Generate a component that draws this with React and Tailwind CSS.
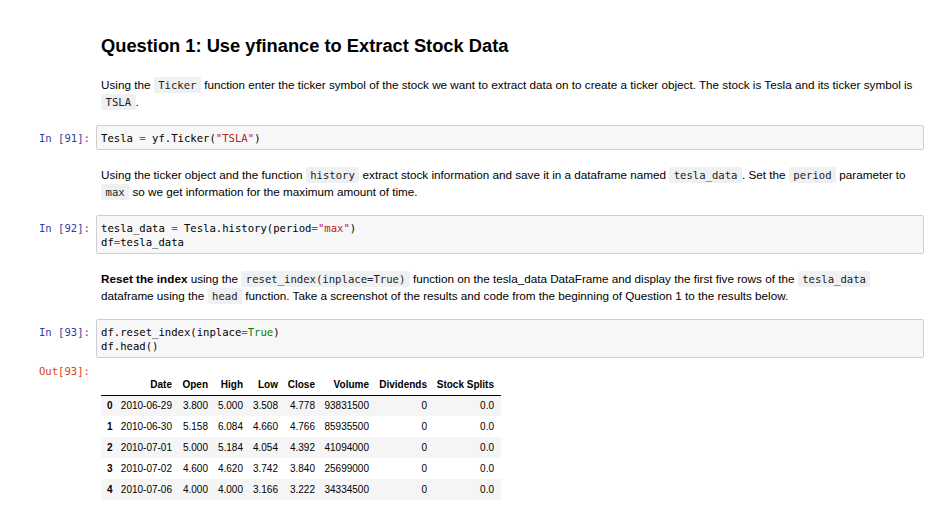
import React from 'react';

const mono = "font-['DejaVu_Sans_Mono',monospace]";

function Code({ children }) {
    return (
        <code className={`${mono} text-[10.6px] text-[#222] bg-[#eff0f1] px-[4.5px] py-[2px] rounded-[2px]`}>
            {children}
        </code>
    );
}

function CodeCell({ n, lines }) {
    return (
        <div className="flex mt-[15px]">
            <div className={`${mono} w-[96px] shrink-0 text-right pr-[6px] pt-[6px] text-[10.6px] leading-[14px] text-[#303f9f]`}>
                In [{n}]:
            </div>
            <div className={`${mono} flex-1 bg-[#f7f7f7] border border-[#cfcfcf] rounded-[2px] pl-[4px] pt-[5px] pb-[4px] text-[10.6px] leading-[14px] text-black whitespace-pre`}>
                {lines.map((l, i) => (
                    <div key={i}>{l}</div>
                ))}
            </div>
        </div>
    );
}

function Md({ children, first }) {
    return (
        <div className={`${first ? 'mt-[20px]' : 'mt-[17px]'} pl-[101px] text-[11.7px] leading-[16.5px] text-black`}>
            {children}
        </div>
    );
}

const Op = ({ children }) => <span className="text-[#aa22ff]">{children}</span>;
const Str = ({ children }) => <span className="text-[#ba2121]">{children}</span>;
const Kw = ({ children }) => <span className="text-[#008000]">{children}</span>;

const rows = [
    ['0', '2010-06-29', '3.800', '5.000', '3.508', '4.778', '93831500', '0', '0.0'],
    ['1', '2010-06-30', '5.158', '6.084', '4.660', '4.766', '85935500', '0', '0.0'],
    ['2', '2010-07-01', '5.000', '5.184', '4.054', '4.392', '41094000', '0', '0.0'],
    ['3', '2010-07-02', '4.600', '4.620', '3.742', '3.840', '25699000', '0', '0.0'],
    ['4', '2010-07-06', '4.000', '4.000', '3.166', '3.222', '34334500', '0', '0.0'],
];

export default function App() {
    return (
        <div className="w-[937px] h-[524px] overflow-hidden bg-white pr-[13px] font-['Liberation_Sans',Arial,sans-serif]">
            {/* Heading */}
            <h2 className="pt-[35px] pl-[101px] text-[18.3px] leading-[22px] font-bold text-black">
                Question 1: Use yfinance to Extract Stock Data
            </h2>

            <Md first>
                <div className="whitespace-nowrap">
                    Using the <Code>Ticker</Code> function enter the ticker symbol of the stock we want to extract data on to create a ticker object. The stock is Tesla and its ticker symbol is
                </div>
                <div className="whitespace-nowrap">
                    <Code>TSLA</Code>.
                </div>
            </Md>

            <CodeCell n="91" lines={[<>Tesla <Op>=</Op> yf.Ticker(<Str>"TSLA"</Str>)</>]} />

            <Md>
                <div className="whitespace-nowrap">
                    Using the ticker object and the function <Code>history</Code> extract stock information and save it in a dataframe named <Code>tesla_data</Code>. Set the <Code>period</Code> parameter to
                </div>
                <div className="whitespace-nowrap">
                    <Code>max</Code> so we get information for the maximum amount of time.
                </div>
            </Md>

            <CodeCell
                n="92"
                lines={[
                    <>tesla_data <Op>=</Op> Tesla.history(period<Op>=</Op><Str>"max"</Str>)</>,
                    <>df<Op>=</Op>tesla_data</>,
                ]}
            />

            <Md>
                <div className="whitespace-nowrap">
                    <b>Reset the index</b> using the <Code>reset_index(inplace=True)</Code> function on the tesla_data DataFrame and display the first five rows of the <Code>tesla_data</Code>
                </div>
                <div className="whitespace-nowrap">
                    dataframe using the <Code>head</Code> function. Take a screenshot of the results and code from the beginning of Question 1 to the results below.
                </div>
            </Md>

            <CodeCell
                n="93"
                lines={[
                    <>df.reset_index(inplace<Op>=</Op><Kw>True</Kw>)</>,
                    <>df.head()</>,
                ]}
            />

            {/* Output */}
            <div className="flex mt-[5px]">
                <div className={`${mono} w-[96px] shrink-0 text-right pr-[6px] pt-[1px] text-[10.6px] leading-[14px] text-[#d84315]`}>
                    Out[93]:
                </div>
                <div className="pl-[5px] pt-[12px]">
                    <table className="table-fixed w-[400px] border-collapse text-[10px] text-black">
                        <thead>
                            <tr className="h-[20px] border-b border-black">
                                <th className="w-[15px]"></th>
                                <th className="w-[63px] text-right pr-[7px] font-bold">Date</th>
                                <th className="w-[36px] text-right pr-[7px] font-bold">Open</th>
                                <th className="w-[35px] text-right pr-[7px] font-bold">High</th>
                                <th className="w-[35px] text-right pr-[7px] font-bold">Low</th>
                                <th className="w-[37px] text-right pr-[7px] font-bold">Close</th>
                                <th className="w-[54px] text-right pr-[7px] font-bold">Volume</th>
                                <th className="w-[58px] text-right pr-[7px] font-bold">Dividends</th>
                                <th className="w-[67px] text-right pr-[7px] font-bold whitespace-nowrap">Stock Splits</th>
                            </tr>
                        </thead>
                        <tbody>
                            {rows.map((r, i) => (
                                <tr key={r[0]} className={`h-[21px] ${i % 2 === 0 ? 'bg-[#f5f5f5]' : 'bg-white'}`}>
                                    <td className="pl-[6px] font-bold">{r[0]}</td>
                                    {r.slice(1).map((c, j) => (
                                        <td key={j} className="text-right pr-[7px] whitespace-nowrap">{c}</td>
                                    ))}
                                </tr>
                            ))}
                        </tbody>
                    </table>
                </div>
            </div>
        </div>
    );
}
